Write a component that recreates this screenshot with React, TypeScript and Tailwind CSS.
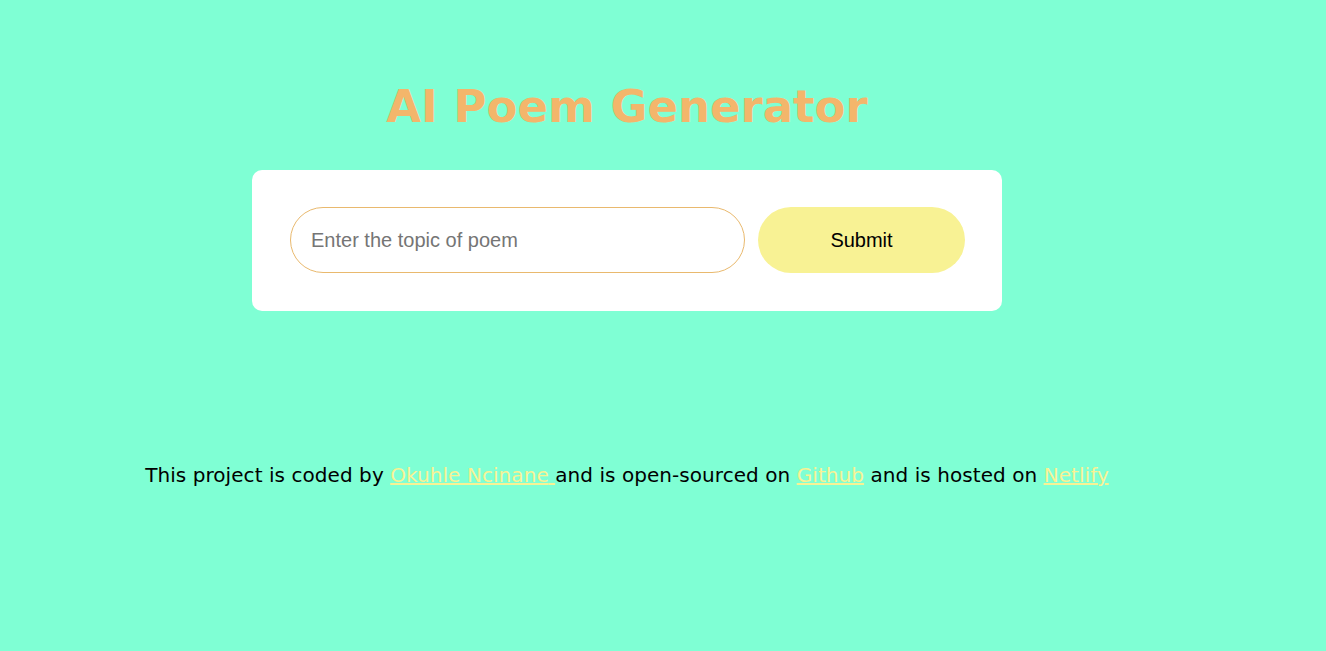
export default function App() {
  return (
    <div className="min-h-[651px] w-full bg-[#7fffd4]">
      <div className="w-[1254px] flex flex-col items-center">
        <h1 className="mt-[77px] text-[45px] leading-[60px] font-bold text-[#f3b66b] font-['DejaVu_Sans',Verdana,sans-serif]">
          AI Poem Generator
        </h1>
        <form
          className="mt-[33px] w-[750px] bg-white rounded-[10px] pl-[38px] pr-[37px] pt-[37px] pb-[38px] flex gap-[13px]"
          onSubmit={(e) => e.preventDefault()}
        >
          <input
            type="text"
            placeholder="Enter the topic of poem"
            className="w-[455px] h-[66px] rounded-full border border-[#e9b96e] px-[20px] text-[20px] font-['Liberation_Sans',Arial,sans-serif] text-black placeholder:text-[#757575] outline-none"
          />
          <button
            type="submit"
            className="w-[207px] h-[66px] rounded-full bg-[#f8f294] text-[20px] text-black font-['Liberation_Sans',Arial,sans-serif]"
          >
            Submit
          </button>
        </form>
        <footer className="mt-[150px] text-[20px] leading-[28px] text-black font-['DejaVu_Sans',Verdana,sans-serif] tracking-[0.06px]">
          This project is coded by{" "}
          <a href="#" className="text-[#f8f294] underline">
            Okuhle Ncinane{" "}
          </a>
          and is open-sourced on{" "}
          <a href="#" className="text-[#f8f294] underline">
            Github
          </a>{" "}
          and is hosted on{" "}
          <a href="#" className="text-[#f8f294] underline">
            Netlify
          </a>
        </footer>
      </div>
    </div>
  );
}
